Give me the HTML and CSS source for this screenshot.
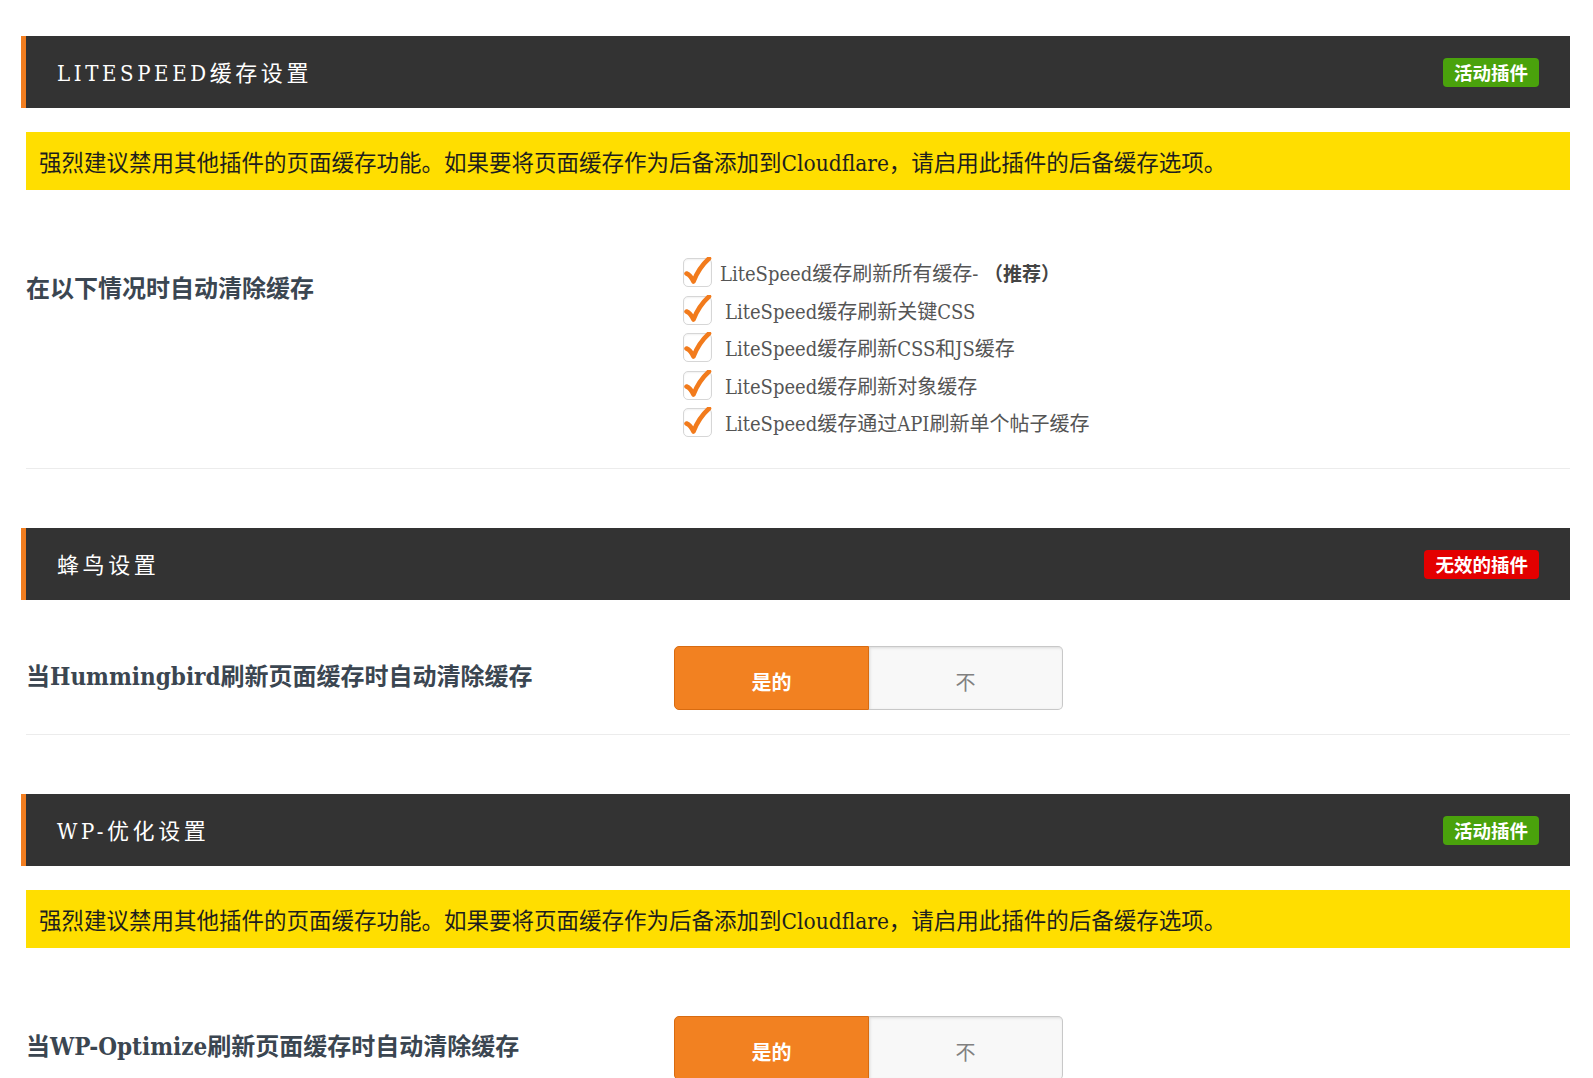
FILE: index.html
```html
<!DOCTYPE html>
<html lang="zh-CN">
<head>
<meta charset="utf-8">
<title>缓存设置</title>
<link rel="stylesheet" href="styles.css">
</head>
<body>
<div class="page">

  <section class="section">
    <div class="sec-head">
      <h2 class="sec-title">LITESPEED缓存设置</h2>
      <span class="badge badge-active">活动插件</span>
    </div>
    <div class="notice">强烈建议禁用其他插件的页面缓存功能。如果要将页面缓存作为后备添加到Cloudflare，请启用此插件的后备缓存选项。</div>
    <div class="row row-list">
      <div class="label">在以下情况时自动清除缓存</div>
      <div class="control">
        <ul class="checks">
          <li class="check-item"><span class="cbox"><svg viewBox="0 0 29 29" width="29" height="29"><path d="M3.5 16.5 Q7.5 18 10.5 24.5 Q15.5 11 26 1.5" fill="none" stroke="#f27b1c" stroke-width="4.6" stroke-linecap="round" stroke-linejoin="round"/></svg></span><span class="check-text">LiteSpeed缓存刷新所有缓存- <b>（推荐）</b></span></li>
          <li class="check-item"><span class="cbox"><svg viewBox="0 0 29 29" width="29" height="29"><path d="M3.5 16.5 Q7.5 18 10.5 24.5 Q15.5 11 26 1.5" fill="none" stroke="#f27b1c" stroke-width="4.6" stroke-linecap="round" stroke-linejoin="round"/></svg></span><span class="check-text spaced">LiteSpeed缓存刷新关键CSS</span></li>
          <li class="check-item"><span class="cbox"><svg viewBox="0 0 29 29" width="29" height="29"><path d="M3.5 16.5 Q7.5 18 10.5 24.5 Q15.5 11 26 1.5" fill="none" stroke="#f27b1c" stroke-width="4.6" stroke-linecap="round" stroke-linejoin="round"/></svg></span><span class="check-text spaced">LiteSpeed缓存刷新CSS和JS缓存</span></li>
          <li class="check-item"><span class="cbox"><svg viewBox="0 0 29 29" width="29" height="29"><path d="M3.5 16.5 Q7.5 18 10.5 24.5 Q15.5 11 26 1.5" fill="none" stroke="#f27b1c" stroke-width="4.6" stroke-linecap="round" stroke-linejoin="round"/></svg></span><span class="check-text spaced">LiteSpeed缓存刷新对象缓存</span></li>
          <li class="check-item"><span class="cbox"><svg viewBox="0 0 29 29" width="29" height="29"><path d="M3.5 16.5 Q7.5 18 10.5 24.5 Q15.5 11 26 1.5" fill="none" stroke="#f27b1c" stroke-width="4.6" stroke-linecap="round" stroke-linejoin="round"/></svg></span><span class="check-text spaced">LiteSpeed缓存通过API刷新单个帖子缓存</span></li>
        </ul>
      </div>
    </div>
  </section>

  <section class="section">
    <div class="sec-head">
      <h2 class="sec-title">蜂鸟设置</h2>
      <span class="badge badge-inactive">无效的插件</span>
    </div>
    <div class="row row-toggle">
      <div class="label">当Hummingbird刷新页面缓存时自动清除缓存</div>
      <div class="control">
        <div class="toggle">
          <span class="opt opt-on">是的</span>
          <span class="opt opt-off">不</span>
        </div>
      </div>
    </div>
  </section>

  <section class="section">
    <div class="sec-head">
      <h2 class="sec-title">WP-优化设置</h2>
      <span class="badge badge-active">活动插件</span>
    </div>
    <div class="notice">强烈建议禁用其他插件的页面缓存功能。如果要将页面缓存作为后备添加到Cloudflare，请启用此插件的后备缓存选项。</div>
    <div class="row row-toggle">
      <div class="label">当WP-Optimize刷新页面缓存时自动清除缓存</div>
      <div class="control">
        <div class="toggle">
          <span class="opt opt-on">是的</span>
          <span class="opt opt-off">不</span>
        </div>
      </div>
    </div>
  </section>

</div>
</body>
</html>
```
FILE: styles.css
```css
html, body {
  margin: 0;
  padding: 0;
  background: #ffffff;
}

body {
  font-family: "DejaVu Serif Condensed", "Liberation Serif", "Noto Sans CJK SC", serif;
  color: #333;
}

.page {
  width: 1549px;
  margin-left: 21px;
  padding-top: 36px;
}

.section {
  margin-bottom: 59px;
}

.sec-head {
  height: 72px;
  background: #333333;
  border-left: 5px solid #f27e20;
  display: flex;
  align-items: center;
  justify-content: space-between;
  padding: 0 31px 0 31px;
  box-sizing: border-box;
}

.sec-title {
  margin: 0;
  padding-top: 3px;
  font-weight: normal;
  font-size: 22px;
  letter-spacing: 3.6px;
  color: #ffffff;
  line-height: 1;
}

.badge {
  display: inline-block;
  font-family: "Noto Sans CJK SC", sans-serif;
  font-weight: bold;
  font-size: 18.5px;
  line-height: 29px;
  height: 29px;
  color: #ffffff;
  border-radius: 4px;
  padding: 0 11px;
}

.badge-active {
  background: #4aa20c;
}

.badge-inactive {
  background: #e30000;
}

.notice {
  margin: 24px 0 22px 5px;
  height: 58px;
  background: #ffde00;
  display: flex;
  align-items: center;
  padding-left: 13px;
  font-size: 22.5px;
  color: #1e1e1e;
}

.row {
  margin-left: 5px;
  display: grid;
  grid-template-columns: 648px 1fr;
  align-items: start;
  border-bottom: 1px solid #ececec;
  padding-top: 46px;
  padding-bottom: 24px;
}

.row-list {
  padding-bottom: 31px;
}

.label {
  font-weight: 600;
  font-size: 24px;
  line-height: 36px;
  color: #3b4651;
  padding-top: 13px;
  white-space: nowrap;
}

.checks {
  list-style: none;
  margin: 0;
  padding: 0 0 0 9px;
}

.check-item {
  display: flex;
  align-items: center;
  height: 29px;
  margin-bottom: 8.5px;
}

.check-item:last-child {
  margin-bottom: 0;
}

.cbox {
  flex: none;
  width: 27px;
  height: 27px;
  border: 1px solid #d6d6d6;
  border-radius: 5px;
  background: #fff;
  position: relative;
  box-shadow: inset 0 1px 2px rgba(0,0,0,0.06);
}

.cbox svg {
  position: absolute;
  left: -1px;
  top: -2px;
}

.check-text {
  margin-left: 8px;
  font-size: 20px;
  color: #555555;
  white-space: nowrap;
}

.check-text.spaced {
  margin-left: 13px;
}

.check-text b {
  font-family: "Noto Sans CJK SC", sans-serif;
  font-weight: bold;
  color: #444;
  font-size: 19px;
}

.toggle {
  display: flex;
  width: 389px;
  height: 64px;
}

.opt {
  flex: 1;
  display: flex;
  align-items: center;
  justify-content: center;
  font-family: "Noto Sans CJK SC", sans-serif;
  font-size: 20px;
  box-sizing: border-box;
  padding-top: 6px;
}

.opt-on {
  background: #f28121;
  border: 1px solid #d86b10;
  border-radius: 5px 0 0 5px;
  color: #ffffff;
  font-weight: bold;
}

.opt-off {
  background: #f8f8f8;
  border: 1px solid #c8c8c8;
  border-left: none;
  border-radius: 0 5px 5px 0;
  color: #808080;
  box-shadow: inset 1px 1px 3px rgba(0,0,0,0.12);
}
```
